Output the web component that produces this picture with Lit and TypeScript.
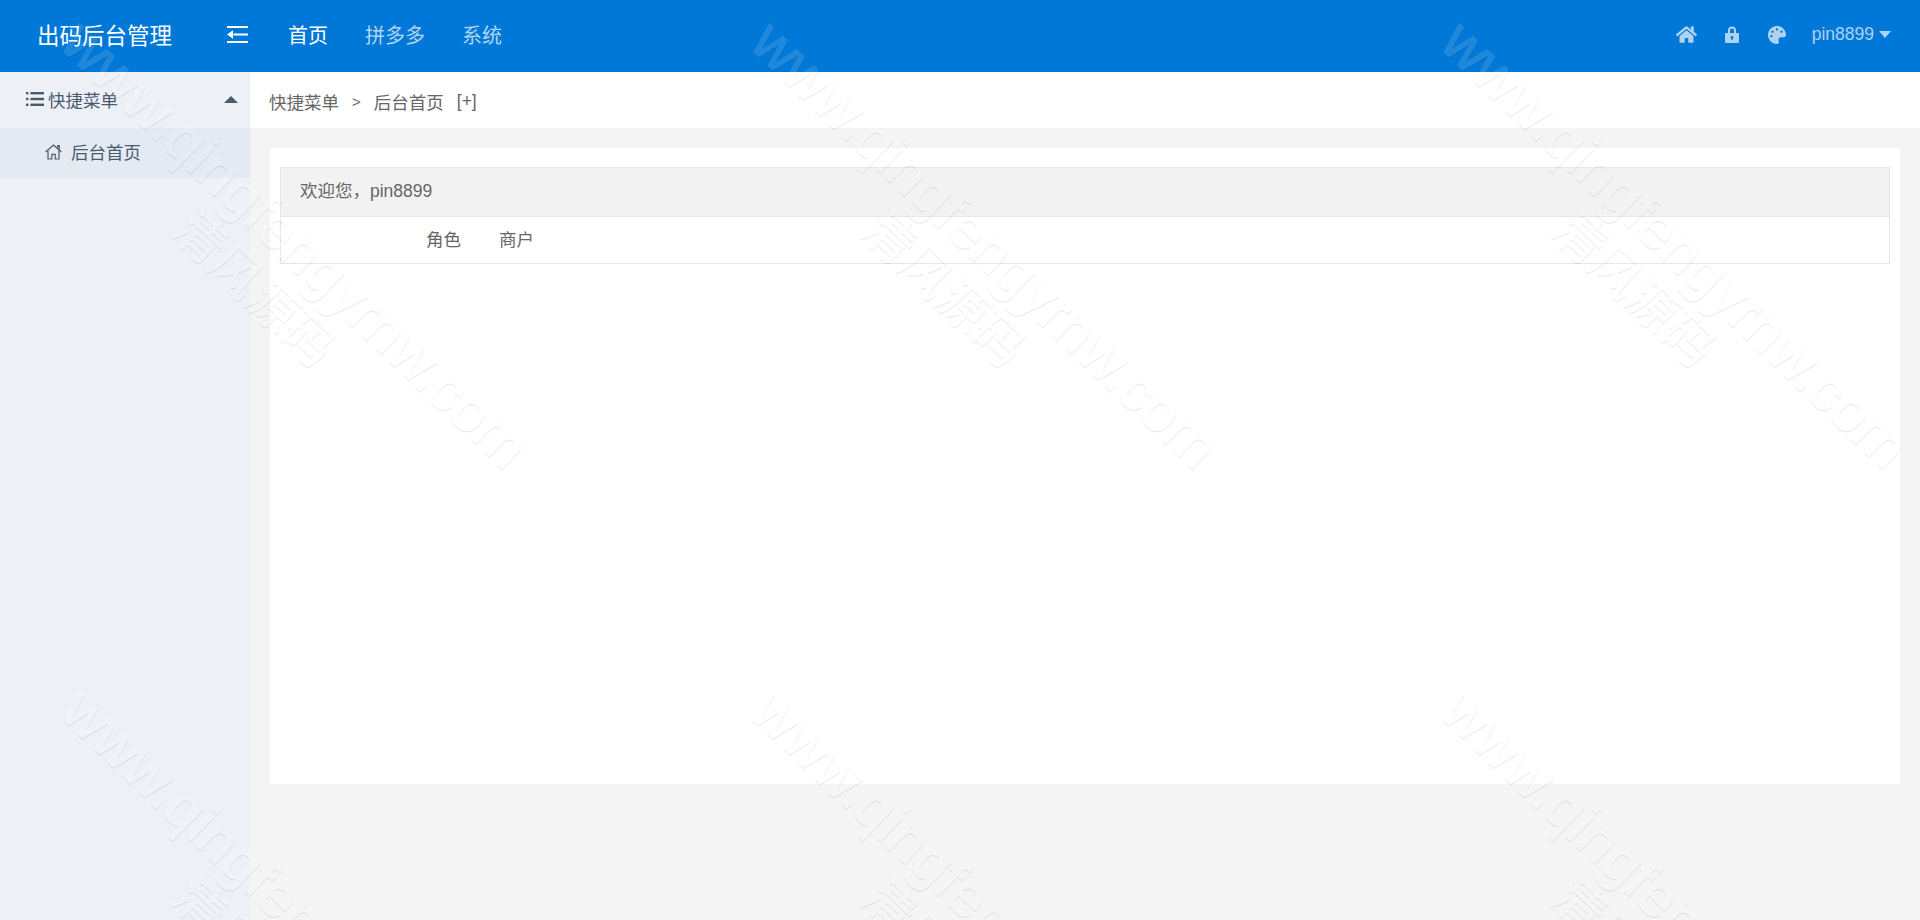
import { html, css, LitElement, svg } from 'lit'
import { customElement } from 'lit/decorators.js'

const marks = [0, 1, 2].flatMap((col) => [0, 1].map((row) => ({ x: 86 + col * 690, y: 0 + row * 668 })))

const homeSolid = svg`<path d="M280.37 148.26L96 300.11V464a16 16 0 0 0 16 16l112.06-.29a16 16 0 0 0 15.92-16V368a16 16 0 0 1 16-16h64a16 16 0 0 1 16 16v95.64a16 16 0 0 0 16 16.05L464 480a16 16 0 0 0 16-16V300L295.67 148.26a12.19 12.19 0 0 0-15.3 0zM571.6 251.47L488 182.56V44.05a12 12 0 0 0-12-12h-56a12 12 0 0 0-12 12v72.61L318.47 43a48 48 0 0 0-61 0L4.34 251.47a12 12 0 0 0-1.6 16.9l25.5 31A12 12 0 0 0 45.15 301l235.22-193.74a12.19 12.19 0 0 1 15.3 0L530.9 301a12 12 0 0 0 16.9-1.6l25.5-31a12 12 0 0 0-1.7-16.93z"/>`
const palette = svg`<path d="M204.3 5C104.9 24.4 24.8 104.3 5.2 203.4c-37 187 131.7 326.4 258.8 306.7 41.2-6.4 61.4-54.6 42.5-91.7-23.1-45.4 9.9-98.4 60.9-98.4h79.7c35.8 0 64.8-29.6 64.9-65.3C511.5 97.1 368.1-26.9 204.3 5zM96 320c-17.7 0-32-14.3-32-32s14.3-32 32-32 32 14.3 32 32-14.3 32-32 32zm32-128c-17.7 0-32-14.3-32-32s14.3-32 32-32 32 14.3 32 32-14.3 32-32 32zm128-64c-17.7 0-32-14.3-32-32s14.3-32 32-32 32 14.3 32 32-14.3 32-32 32zm128 64c-17.7 0-32-14.3-32-32s14.3-32 32-32 32 14.3 32 32-14.3 32-32 32z"/>`

@customElement('app-root')
export class AppRoot extends LitElement {
  render() {
    return html`
      <header class="top">
        <div class="brand">出码后台管理</div>
        <svg class="fold" viewBox="0 0 21 17" width="21" height="17" fill="#fff">
          <rect x="0" y="0" width="21" height="2" />
          <rect x="6.5" y="7.5" width="14.5" height="2" />
          <rect x="0" y="15" width="21" height="2" />
          <path d="M0 8.5L6 4.2V12.8Z" />
        </svg>
        <nav class="nav">
          <a class="on">首页</a>
          <a>拼多多</a>
          <a>系统</a>
        </nav>
        <div class="tools">
          <svg class="ic-home" viewBox="0 0 576 512" width="21" height="19" fill="currentColor">${homeSolid}</svg>
          <svg class="ic-lock" viewBox="0 0 14 17" width="14" height="17" fill="currentColor">
            <path
              fill-rule="evenodd"
              d="M3 7V4.5a4 4 0 0 1 8 0V7h2a1 1 0 0 1 1 1v8a1 1 0 0 1-1 1H1a1 1 0 0 1-1-1V8a1 1 0 0 1 1-1zM5 7h4V4.5a2 2 0 0 0-4 0zM7 10a1.4 1.4 0 0 0-.7 2.6V14h1.4v-1.4A1.4 1.4 0 0 0 7 10z"
            />
          </svg>
          <svg class="ic-palette" viewBox="0 0 512 512" width="18" height="18" fill="currentColor">${palette}</svg>
          <div class="user">pin8899<i class="caret-down"></i></div>
        </div>
      </header>
      <div class="main">
        <aside class="side">
          <div class="group">
            <svg class="ic-list" viewBox="0 0 18 16" width="18" height="16" fill="currentColor">
              <rect x="0" y="1" width="2.4" height="2.4" />
              <rect x="0" y="6.8" width="2.4" height="2.4" />
              <rect x="0" y="12.6" width="2.4" height="2.4" />
              <rect x="4.4" y="1" width="13.6" height="2.4" />
              <rect x="4.4" y="6.8" width="13.6" height="2.4" />
              <rect x="4.4" y="12.6" width="13.6" height="2.4" />
            </svg>
            <span>快捷菜单</span>
            <i class="caret-up"></i>
          </div>
          <div class="item">
            <svg class="ic-house" viewBox="0 0 17 16" width="17" height="16" fill="none" stroke="currentColor" stroke-width="1.2">
              <path d="M.6 8L8.5 1l7.9 7" />
              <path d="M12.7 4.6V1.6h1.6v4.8" />
              <path d="M3 6.6V15h3.8v-4.6h3.4V15H14V6.6" />
            </svg>
            <span>后台首页</span>
          </div>
        </aside>
        <section class="content">
          <div class="crumbs">
            <span>快捷菜单</span>
            <span class="sep">&gt;</span>
            <span>后台首页</span>
            <span class="add">[+]</span>
          </div>
          <div class="wrap">
            <div class="card">
              <div class="panel">
                <div class="panel-head">欢迎您，pin8899</div>
                <div class="panel-body">
                  <span>角色</span>
                  <span>商户</span>
                </div>
              </div>
            </div>
          </div>
        </section>
      </div>
      <svg class="defs" width="0" height="0">
        <filter id="emboss" x="0" y="0" width="100%" height="100%" color-interpolation-filters="sRGB">
          <feOffset in="SourceAlpha" dx="0" dy="1.4" />
          <feGaussianBlur stdDeviation="0.6" />
          <feComposite in2="SourceAlpha" operator="out" result="edge" />
          <feFlood flood-color="#000" flood-opacity="0.1" />
          <feComposite in2="edge" operator="in" result="shade" />
          <feFlood flood-color="#fff" flood-opacity="0.12" />
          <feComposite in2="SourceAlpha" operator="in" result="face" />
          <feMerge>
            <feMergeNode in="shade" />
            <feMergeNode in="face" />
          </feMerge>
        </filter>
      </svg>
      <div class="marks">
        ${marks.map(
          (m) => html`
            <div class="mark" style="left:${m.x}px;top:${m.y}px">
              <div class="en">www.qingfengyrnw.com</div>
              <div class="cn">清风源码</div>
            </div>
          `,
        )}
      </div>
    `
  }

  static styles = css`
    :host {
      display: flex;
      flex-direction: column;
      position: relative;
      height: 100vh;
      overflow: hidden;
      background: #f4f4f4;
      color: #666;
      font-family: 'Liberation Sans', 'Noto Sans CJK SC', sans-serif;
      font-size: 17.5px;
    }

    .top {
      display: flex;
      align-items: center;
      flex: none;
      height: 72px;
      padding-bottom: 3px;
      box-sizing: border-box;
      background: #0078d7;
      color: #fff;
    }

    .brand {
      width: 190px;
      padding: 0 0 2px 37px;
      font-size: 22.5px;
    }

    .fold {
      flex: none;
    }

    .nav {
      display: flex;
      gap: 37px;
      margin-left: 40px;
      padding-bottom: 1px;
      font-size: 20px;
      color: rgba(255, 255, 255, 0.7);
    }

    .nav .on {
      color: #fff;
    }

    .tools {
      display: flex;
      align-items: center;
      margin-left: auto;
      padding-right: 29px;
      color: rgba(255, 255, 255, 0.68);
    }

    .ic-lock {
      margin-left: 28px;
    }

    .ic-palette {
      margin-left: 29px;
    }

    .user {
      display: flex;
      align-items: center;
      margin-left: 26px;
    }

    .caret-down {
      margin-left: 5px;
      border: 6.5px solid transparent;
      border-top: 7px solid currentColor;
      border-bottom: 0;
    }

    .main {
      display: flex;
      flex: 1;
      min-height: 0;
    }

    .side {
      flex: none;
      width: 250px;
      background: #edf1f6;
      color: #4a5b6e;
    }

    .group {
      display: flex;
      align-items: center;
      height: 56px;
      padding: 0 12px 2px 26px;
      box-sizing: border-box;
    }

    .ic-list {
      margin-right: 4px;
    }

    .caret-up {
      margin-left: auto;
      border: 7px solid transparent;
      border-bottom: 7px solid currentColor;
      border-top: 0;
    }

    .item {
      display: flex;
      align-items: center;
      height: 50px;
      padding: 0 0 3px 45px;
      box-sizing: border-box;
      background: #e4e9f2;
    }

    .ic-house {
      margin-right: 9px;
    }

    .content {
      display: flex;
      flex-direction: column;
      flex: 1;
      min-width: 0;
    }

    .crumbs {
      display: flex;
      align-items: center;
      flex: none;
      height: 56px;
      padding: 3px 0 0 19px;
      box-sizing: border-box;
      background: #fff;
    }

    .sep {
      margin: 0 13px 0 13px;
      font-size: 15px;
    }

    .add {
      margin-left: 13px;
    }

    .wrap {
      padding: 20px 20px 0 20px;
    }

    .card {
      height: 636px;
      box-sizing: border-box;
      padding: 19px 10px;
      background: #fff;
    }

    .panel {
      border: 1px solid #e6e6e6;
    }

    .panel-head {
      display: flex;
      align-items: center;
      height: 49px;
      padding: 0 0 5px 19px;
      box-sizing: border-box;
      background: #f2f2f2;
      border-bottom: 1px solid #e6e6e6;
    }

    .panel-body {
      display: flex;
      align-items: center;
      gap: 38px;
      height: 46px;
      padding: 0 0 3px 145px;
      box-sizing: border-box;
    }

    .defs {
      position: absolute;
    }

    .marks {
      position: absolute;
      inset: 0;
      overflow: hidden;
      pointer-events: none;
      filter: url(#emboss);
    }

    .mark {
      position: absolute;
      width: 640px;
      transform: rotate(43.5deg);
      transform-origin: 0 0;
      text-align: center;
      color: #fff;
    }

    .en {
      font-size: 59px;
      line-height: 66px;
      white-space: nowrap;
      -webkit-text-stroke: 1.6px #fff;
    }

    .cn {
      font-size: 50px;
      line-height: 56px;
      -webkit-text-stroke: 0.6px #fff;
    }
  `
}
